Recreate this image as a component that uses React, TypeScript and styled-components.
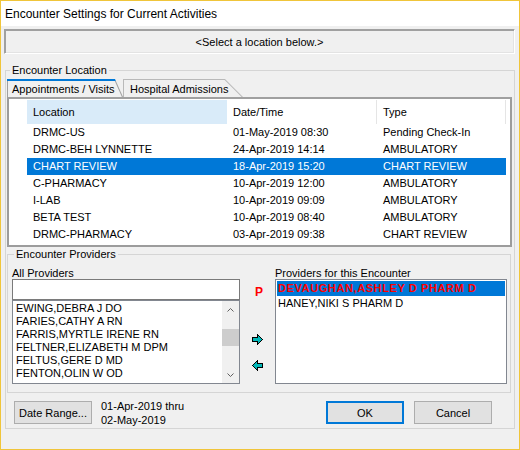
import React from "react";
import styled, { createGlobalStyle } from "styled-components";

const GlobalStyle = createGlobalStyle`
  html, body { margin: 0; padding: 0; background: #f0f0f0; }
  body { font-family: "Liberation Sans", Arial, sans-serif; font-size: 11px; color: #000; }
  * { box-sizing: border-box; }
`;

const Window = styled.div`
  width: 520px;
  height: 450px;
  border: 1px solid #f0c53a;
  background: #f0f0f0;
  display: flex;
  flex-direction: column;
`;

const TitleBar = styled.div`
  height: 25px;
  background: #fff;
  padding-left: 4px;
  display: flex;
  align-items: center;
  font-size: 12px;
`;

const Body = styled.div`
  flex: 1;
  display: flex;
  flex-direction: column;
  padding: 3px 4px 0 3px;
`;

const StatusBox = styled.div`
  height: 25px;
  display: flex;
  align-items: center;
  justify-content: center;
  border: 1px solid;
  border-color: #a0a0a0 #ffffff #ffffff #a0a0a0;
  box-shadow: inset 1px 1px 0 #a0a0a0, inset -1px -1px 0 #e3e3e3;
`;

const Group = styled.fieldset<{ $m: string; $p: string }>`
  margin: ${(p) => p.$m};
  padding: ${(p) => p.$p};
  border: 1px solid #d5d5d5;
  min-width: 0;
`;

const Legend = styled.legend<{ $ml: number }>`
  margin-left: ${(p) => p.$ml}px;
  padding: 0 2px;
  line-height: 12px;
  font-size: 11px;
`;

const TabStrip = styled.div`
  display: flex;
  height: 18px;
`;

const TabOuter = styled.div<{ $active?: boolean; $w: number; $slant: number }>`
  width: ${(p) => p.$w}px;
  height: 18px;
  padding: ${(p) => (p.$active ? "2px 0 0 1px" : "1px 0 0 1px")};
  background: ${(p) => (p.$active ? "linear-gradient(#0078d7 0 2px, #a0a0a0 2px)" : "#b9b9b9")};
  clip-path: polygon(0 0, calc(100% - ${(p) => p.$slant}px) 0, 100% 100%, 0 100%);
`;

const TabFace = styled.div<{ $top: number; $bot: number; $pad: number }>`
  height: 100%;
  background: #f0f0f0;
  padding-left: ${(p) => p.$pad}px;
  display: flex;
  align-items: center;
  white-space: nowrap;
  clip-path: polygon(0 0, calc(100% - ${(p) => p.$top}px) 0, calc(100% - ${(p) => p.$bot}px) 100%, 0 100%);
`;

const Tab: React.FC<{ active?: boolean; w: number; slant: number; pad: number; children: React.ReactNode }> = ({
  active,
  w,
  slant,
  pad,
  children,
}) => {
  const pt = active ? 2 : 1;
  const d = slant > 10 ? 1.4 : 1.1;
  const top = slant - (slant * pt) / 18 + d;
  return (
    <TabOuter $active={active} $w={w} $slant={slant}>
      <TabFace $top={top} $bot={d} $pad={pad}>
        {children}
      </TabFace>
    </TabOuter>
  );
};

const ListView = styled.div`
  height: 150px;
  background: #fff;
  border: 2px solid #9c9c9c;
  border-top-color: #a0a0a0;
  overflow: hidden;
`;

const COLS = "18px 200px 150px 129px";

const HeaderRow = styled.div`
  display: grid;
  grid-template-columns: ${COLS};
  height: 24px;
  margin-top: 1px;
`;

const HeaderCell = styled.div<{ $hot?: boolean }>`
  padding-left: 6px;
  display: flex;
  align-items: center;
  background: ${(p) => (p.$hot ? "#d9ebf9" : "#fff")};
  border-right: 1px solid ${(p) => (p.$hot ? "#d9ebf9" : "#e5e5e5")};
`;

const Spacer = styled.div``;

const Row = styled.div`
  display: grid;
  grid-template-columns: ${COLS};
  height: 17px;
`;

const Cell = styled.div<{ $sel?: boolean }>`
  padding-left: 6px;
  line-height: 17px;
  white-space: nowrap;
  background: ${(p) => (p.$sel ? "#0078d7" : "transparent")};
  color: ${(p) => (p.$sel ? "#fff" : "#000")};
`;

const ProvidersGrid = styled.div`
  display: grid;
  grid-template-columns: 228px 35px 232px;
  grid-template-rows: 12px 105px;
`;

const FieldLabel = styled.div`
  line-height: 12px;
  white-space: nowrap;
`;

const LeftCol = styled.div`
  display: flex;
  flex-direction: column;
`;

const SearchBox = styled.div`
  height: 21px;
  background: #fff;
  border: 1px solid #7a7a7a;
`;

const ListBox = styled.div<{ $h: number }>`
  height: ${(p) => p.$h}px;
  background: #fff;
  border: 1px solid #828790;
  display: flex;
  overflow: hidden;
`;

const ItemList = styled.div<{ $pad: string }>`
  flex: 1;
  padding: ${(p) => p.$pad};
  overflow: hidden;
`;

const Item = styled.div<{ $h: number; $sel?: boolean; $hl?: boolean }>`
  height: ${(p) => p.$h}px;
  line-height: ${(p) => p.$h}px;
  white-space: nowrap;
  padding-left: 1px;
  background: ${(p) => (p.$sel ? "#0078d7" : "transparent")};
  color: ${(p) => (p.$hl ? "#ff0000" : "#000")};
  font-weight: ${(p) => (p.$hl ? 700 : 400)};
  letter-spacing: ${(p) => (p.$hl ? "0.6px" : "normal")};
`;

const ScrollBar = styled.div`
  width: 17px;
  background: #f0f0f0;
  display: flex;
  flex-direction: column;
`;

const ScrollBtn = styled.div`
  height: 17px;
  display: flex;
  align-items: center;
  justify-content: center;
`;

const Track = styled.div`
  flex: 1;
  padding-top: 11px;
`;

const Thumb = styled.div`
  height: 17px;
  background: #cdcdcd;
`;

const MidCol = styled.div`
  display: flex;
  flex-direction: column;
  align-items: center;
  padding-top: 7px;
`;

const PMark = styled.div`
  color: #ff0000;
  font-weight: 700;
  font-size: 12px;
  line-height: 13px;
  margin-left: 3px;
  margin-bottom: 35px;
`;

const ArrowBtn = styled.div<{ $mb: number }>`
  width: 11px;
  height: 11px;
  margin-bottom: ${(p) => p.$mb}px;
  display: flex;
`;

const BottomRow = styled.div`
  display: flex;
  align-items: flex-start;
  margin-top: 8px;
  padding-left: 7px;
  height: 23px;
`;

const Button = styled.div<{ $default?: boolean; $ml?: number; $mr?: number }>`
  width: 78px;
  height: 23px;
  background: #e1e1e1;
  border: ${(p) => (p.$default ? "2px solid #0078d7" : "1px solid #adadad")};
  display: flex;
  align-items: center;
  justify-content: center;
  margin-left: ${(p) => p.$ml ?? 0}px;
  margin-right: ${(p) => p.$mr ?? 0}px;
`;

const DateText = styled.div`
  margin-left: 9px;
  margin-top: -2px;
  line-height: 14px;
`;

const Fill = styled.div`
  flex: 1;
`;

const Chevron: React.FC<{ down?: boolean }> = ({ down }) => (
  <svg width="7" height="4" viewBox="0 0 7 4">
    <polyline
      points={down ? "0.5,0.5 3.5,3.5 6.5,0.5" : "0.5,3.5 3.5,0.5 6.5,3.5"}
      fill="none"
      stroke="#606060"
      strokeWidth="1"
    />
  </svg>
);

const Arrow: React.FC<{ left?: boolean }> = ({ left }) => (
  <svg width="11" height="11" viewBox="0 0 11 11" shapeRendering="crispEdges">
    <polygon
      points={
        left
          ? "10.5,3.5 5.5,3.5 5.5,0.5 0.5,5.5 5.5,10.5 5.5,7.5 10.5,7.5"
          : "0.5,3.5 5.5,3.5 5.5,0.5 10.5,5.5 5.5,10.5 5.5,7.5 0.5,7.5"
      }
      fill="#00b8b8"
      stroke="#000"
      strokeWidth="1"
    />
  </svg>
);

const rows = [
  ["DRMC-US", "01-May-2019 08:30", "Pending Check-In"],
  ["DRMC-BEH LYNNETTE", "24-Apr-2019 14:14", "AMBULATORY"],
  ["CHART REVIEW", "18-Apr-2019 15:20", "CHART REVIEW"],
  ["C-PHARMACY", "10-Apr-2019 12:00", "AMBULATORY"],
  ["I-LAB", "10-Apr-2019 09:09", "AMBULATORY"],
  ["BETA TEST", "10-Apr-2019 08:40", "AMBULATORY"],
  ["DRMC-PHARMACY", "03-Apr-2019 09:38", "CHART REVIEW"],
];

const allProviders = [
  "EWING,DEBRA J DO",
  "FARIES,CATHY A RN",
  "FARRIS,MYRTLE IRENE RN",
  "FELTNER,ELIZABETH M DPM",
  "FELTUS,GERE D MD",
  "FENTON,OLIN W OD",
];

export default function App() {
  return (
    <>
      <GlobalStyle />
      <Window>
        <TitleBar>Encounter Settings for Current Activities</TitleBar>
        <Body>
          <StatusBox>&lt;Select a location below.&gt;</StatusBox>
          <Group $m="10px 0 0 1px" $p="3px 2px 4px 1px">
            <Legend $ml={3}>Encounter Location</Legend>
            <TabStrip>
              <Tab active w={116} slant={8} pad={4}>
                Appointments / Visits
              </Tab>
              <Tab w={120} slant={18} pad={6}>
                Hospital Admissions
              </Tab>
            </TabStrip>
            <ListView>
              <HeaderRow>
                <Spacer />
                <HeaderCell $hot>Location</HeaderCell>
                <HeaderCell>Date/Time</HeaderCell>
                <HeaderCell>Type</HeaderCell>
              </HeaderRow>
              {rows.map((r, i) => (
                <Row key={r[0]}>
                  <Spacer />
                  {r.map((c, j) => (
                    <Cell key={j} $sel={i === 2}>
                      {c}
                    </Cell>
                  ))}
                </Row>
              ))}
            </ListView>
            <Group $m="1px 1px 0 0" $p="7px 2px 8px 4px">
              <Legend $ml={2}>Encounter Providers</Legend>
              <ProvidersGrid>
                <FieldLabel>All Providers</FieldLabel>
                <div />
                <FieldLabel>Providers for this Encounter</FieldLabel>
                <LeftCol>
                  <SearchBox />
                  <ListBox $h={84}>
                    <ItemList $pad="1px 0 0 2px">
                      {allProviders.map((p) => (
                        <Item key={p} $h={13}>
                          {p}
                        </Item>
                      ))}
                    </ItemList>
                    <ScrollBar>
                      <ScrollBtn>
                        <Chevron />
                      </ScrollBtn>
                      <Track>
                        <Thumb />
                      </Track>
                      <ScrollBtn>
                        <Chevron down />
                      </ScrollBtn>
                    </ScrollBar>
                  </ListBox>
                </LeftCol>
                <MidCol>
                  <PMark>P</PMark>
                  <ArrowBtn $mb={15}>
                    <Arrow />
                  </ArrowBtn>
                  <ArrowBtn $mb={0}>
                    <Arrow left />
                  </ArrowBtn>
                </MidCol>
                <ListBox $h={105}>
                  <ItemList $pad="1px">
                    <Item $h={15} $sel $hl>
                      DEVAUGHAN,ASHLEY D PHARM D
                    </Item>
                    <Item $h={15}>HANEY,NIKI S PHARM D</Item>
                  </ItemList>
                </ListBox>
              </ProvidersGrid>
            </Group>
            <BottomRow>
              <Button>Date Range...</Button>
              <DateText>
                01-Apr-2019 thru
                <br />
                02-May-2019
              </DateText>
              <Fill />
              <Button $default>OK</Button>
              <Button $ml={10} $mr={20}>
                Cancel
              </Button>
            </BottomRow>
          </Group>
        </Body>
      </Window>
    </>
  );
}
